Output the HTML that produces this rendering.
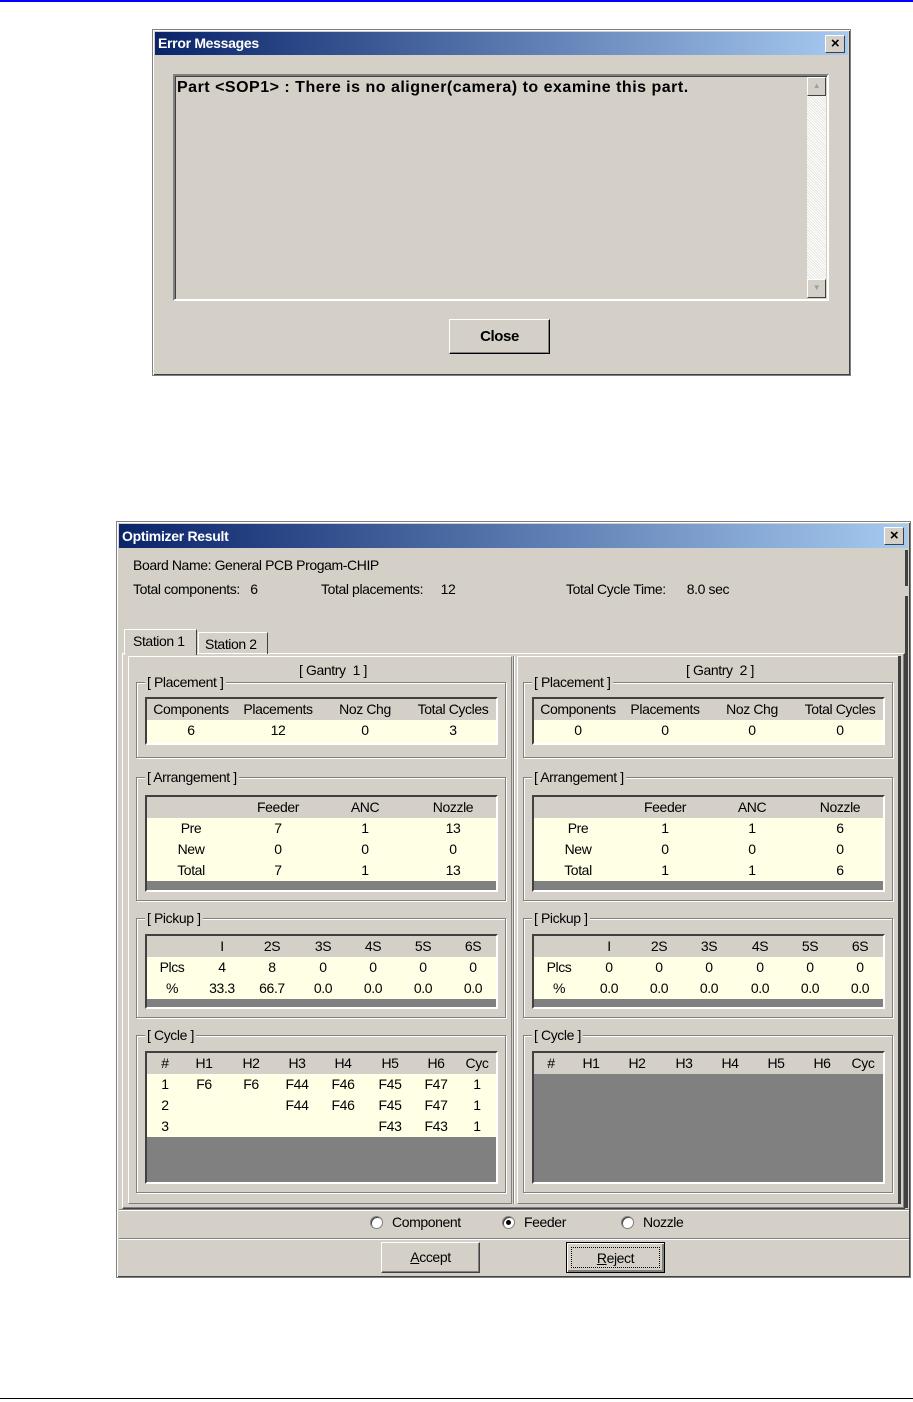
<!DOCTYPE html>
<html><head><meta charset="utf-8"><style>
*{margin:0;padding:0;box-sizing:border-box}
body{width:913px;height:1402px;position:relative;background:#fff;font-family:"Liberation Sans",sans-serif;font-size:14px;color:#000;overflow:hidden;letter-spacing:-0.4px}
div,span{position:absolute}
.win{background:#d4d0c8;border:1px solid #808080;box-shadow:inset 1px 1px #fff,inset -1px -1px #404040}
.title{background:linear-gradient(90deg,#0a246a,#a6caf0);color:#fff;font-weight:bold;font-size:14px;line-height:22px;padding-left:3px;letter-spacing:-0.3px}
.xb{width:20px;height:18px;background:#d4d0c8;border:1px solid;border-color:#fff #404040 #404040 #fff;font-weight:bold;font-size:15px;line-height:15px;text-align:center;color:#000}
.sunk{border:2px solid;border-color:#808080 #fff #fff #808080;box-shadow:inset 1px 1px #404040}
.grp{border:1px solid #808080;box-shadow:1px 1px #fff,inset 1px 1px #fff}
.lg{background:#d4d0c8;padding:0 2px;line-height:16px}
.tb{background:#808080;border:2px solid;border-color:#404040 #fff #fff #404040;overflow:hidden}
.hd{left:0;right:0;background:#d4d0c8;height:21px}
.yl{left:0;right:0;background:#ffffe6}
.c{width:80px;margin-left:-40px;text-align:center;line-height:21px}
.btn{background:#d4d0c8;border:1px solid;border-color:#fff #404040 #404040 #fff;box-shadow:inset -1px -1px #808080;text-align:center;line-height:28px}
.rd{width:13px;height:13px;border-radius:50%;background:#fff;border:1px solid #808080;box-shadow:inset 1px 1px #404040}
</style></head><body>
<div style="left:0;top:0;width:913px;height:2px;background:#0000ff"></div>
<div style="left:0;top:1398px;width:913px;height:1px;background:#000"></div>

<!-- Error Messages -->
<div class="win" style="left:152px;top:29px;width:699px;height:347px"></div>
<div class="title" style="left:155px;top:32px;width:693px;height:23px">Error Messages</div>
<div class="xb" style="left:825px;top:35px">×</div>
<div class="sunk" style="left:173px;top:74px;width:656px;height:227px;background:#d4d0c8"></div>
<div style="left:177px;top:79px;font-weight:bold;font-size:16px;letter-spacing:0.5px">Part &lt;SOP1&gt; : There is no aligner(camera) to examine this part.</div>
<div style="left:807px;top:77px;width:19px;height:221px;background:repeating-linear-gradient(45deg,#e8e6e0 0 1px,#fff 1px 2px)"></div>
<div class="xb" style="left:807px;top:77px;width:19px;height:19px;font-size:8px;color:#a0a0a0;line-height:16px">▲</div>
<div class="xb" style="left:807px;top:279px;width:19px;height:19px;font-size:8px;color:#a0a0a0;line-height:16px">▼</div>
<div class="btn" style="left:449px;top:319px;width:101px;height:35px;font-weight:bold;line-height:33px;font-size:15px;border-color:#fff #000 #000 #fff">Close</div>

<!-- Optimizer Result -->
<div class="win" style="left:116px;top:521px;width:795px;height:757px"></div>
<div class="title" style="left:119px;top:524px;width:789px;height:24px;line-height:24px">Optimizer Result</div>
<div class="xb" style="left:884px;top:527px">×</div>
<div style="left:133px;top:557px">Board Name: General PCB Progam-CHIP</div>
<div style="left:133px;top:581px">Total components:&nbsp;&nbsp;&nbsp;6</div>
<div style="left:321px;top:581px">Total placements:&nbsp;&nbsp;&nbsp;&nbsp;&nbsp;12</div>
<div style="left:566px;top:581px">Total Cycle Time:&nbsp;&nbsp;&nbsp;&nbsp;&nbsp;&nbsp;8.0 sec</div>
<div style="left:905px;top:550px;width:3px;height:36px;background:#404040"></div>
<div style="left:905px;top:596px;width:3px;height:612px;background:#404040"></div>
<!-- tabs -->
<div style="left:122px;top:653px;width:783px;height:556px;border:1px solid;border-color:#fff #404040 #404040 #fff;box-shadow:inset -1px -1px #808080"></div>
<div style="left:124px;top:629px;width:73px;height:26px;background:#d4d0c8;border:1px solid;border-bottom:none;border-color:#fff #404040 #fff #fff;line-height:22px;padding-left:8px">Station 1</div>
<div style="left:198px;top:632px;width:70px;height:22px;border:1px solid;border-bottom:none;border-color:#fff #404040 #fff #fff;line-height:22px;padding-left:6px">Station 2</div>
<div style="left:128px;top:656px;width:384px;height:548px;border:1px solid;border-color:#fff #808080 #808080 #fff"></div>
<div style="left:513px;top:656px;width:2px;height:548px;background:#808080;border-right:1px solid #fff"></div>
<div style="left:517px;top:656px;width:384px;height:548px;border:1px solid;border-color:#fff #808080 #808080 #fff"></div>
<div style="left:898px;top:656px;width:3px;height:548px;background:#404040"></div>

<div class="c" style="left:333px;top:660px;width:120px;margin-left:-60px">[ Gantry&nbsp; 1 ]</div>
<div class="c" style="left:720px;top:660px;width:120px;margin-left:-60px">[ Gantry&nbsp; 2 ]</div>

<!-- LEFT groups -->
<div class="grp" style="left:136px;top:682px;width:370px;height:76px"></div>
<div class="lg" style="left:145px;top:674px">[ Placement ]</div>
<div class="tb" style="left:145px;top:697px;width:353px;height:48px"><div class="hd" style="top:0"></div><div class="yl" style="top:21px;height:23px"></div></div>
<span class="c" style="left:191px;top:699px">Components</span><span class="c" style="left:278px;top:699px">Placements</span><span class="c" style="left:365px;top:699px">Noz Chg</span><span class="c" style="left:453px;top:699px">Total Cycles</span>
<span class="c" style="left:191px;top:720px">6</span><span class="c" style="left:278px;top:720px">12</span><span class="c" style="left:365px;top:720px">0</span><span class="c" style="left:453px;top:720px">3</span>

<div class="grp" style="left:136px;top:777px;width:370px;height:124px"></div>
<div class="lg" style="left:145px;top:769px">[ Arrangement ]</div>
<div class="tb" style="left:145px;top:795px;width:353px;height:97px"><div class="hd" style="top:0"></div><div class="yl" style="top:21px;height:63px"></div></div>
<span class="c" style="left:278px;top:797px">Feeder</span><span class="c" style="left:365px;top:797px">ANC</span><span class="c" style="left:453px;top:797px">Nozzle</span>
<span class="c" style="left:191px;top:818px">Pre</span><span class="c" style="left:278px;top:818px">7</span><span class="c" style="left:365px;top:818px">1</span><span class="c" style="left:453px;top:818px">13</span>
<span class="c" style="left:191px;top:839px">New</span><span class="c" style="left:278px;top:839px">0</span><span class="c" style="left:365px;top:839px">0</span><span class="c" style="left:453px;top:839px">0</span>
<span class="c" style="left:191px;top:860px">Total</span><span class="c" style="left:278px;top:860px">7</span><span class="c" style="left:365px;top:860px">1</span><span class="c" style="left:453px;top:860px">13</span>

<div class="grp" style="left:136px;top:918px;width:370px;height:100px"></div>
<div class="lg" style="left:145px;top:910px">[ Pickup ]</div>
<div class="tb" style="left:145px;top:934px;width:353px;height:75px"><div class="hd" style="top:0"></div><div class="yl" style="top:21px;height:42px"></div></div>
<span class="c" style="left:222px;top:936px">I</span><span class="c" style="left:272px;top:936px">2S</span><span class="c" style="left:323px;top:936px">3S</span><span class="c" style="left:373px;top:936px">4S</span><span class="c" style="left:423px;top:936px">5S</span><span class="c" style="left:473px;top:936px">6S</span>
<span class="c" style="left:172px;top:957px">Plcs</span><span class="c" style="left:222px;top:957px">4</span><span class="c" style="left:272px;top:957px">8</span><span class="c" style="left:323px;top:957px">0</span><span class="c" style="left:373px;top:957px">0</span><span class="c" style="left:423px;top:957px">0</span><span class="c" style="left:473px;top:957px">0</span>
<span class="c" style="left:172px;top:978px">%</span><span class="c" style="left:222px;top:978px">33.3</span><span class="c" style="left:272px;top:978px">66.7</span><span class="c" style="left:323px;top:978px">0.0</span><span class="c" style="left:373px;top:978px">0.0</span><span class="c" style="left:423px;top:978px">0.0</span><span class="c" style="left:473px;top:978px">0.0</span>

<div class="grp" style="left:136px;top:1035px;width:370px;height:158px"></div>
<div class="lg" style="left:145px;top:1027px">[ Cycle ]</div>
<div class="tb" style="left:145px;top:1051px;width:353px;height:133px"><div class="hd" style="top:0"></div><div class="yl" style="top:21px;height:63px"></div></div>
<span class="c" style="left:165px;top:1053px">#</span><span class="c" style="left:204px;top:1053px">H1</span><span class="c" style="left:251px;top:1053px">H2</span><span class="c" style="left:297px;top:1053px">H3</span><span class="c" style="left:343px;top:1053px">H4</span><span class="c" style="left:390px;top:1053px">H5</span><span class="c" style="left:436px;top:1053px">H6</span><span class="c" style="left:477px;top:1053px">Cyc</span>
<span class="c" style="left:165px;top:1074px">1</span><span class="c" style="left:204px;top:1074px">F6</span><span class="c" style="left:251px;top:1074px">F6</span><span class="c" style="left:297px;top:1074px">F44</span><span class="c" style="left:343px;top:1074px">F46</span><span class="c" style="left:390px;top:1074px">F45</span><span class="c" style="left:436px;top:1074px">F47</span><span class="c" style="left:477px;top:1074px">1</span>
<span class="c" style="left:165px;top:1095px">2</span><span class="c" style="left:297px;top:1095px">F44</span><span class="c" style="left:343px;top:1095px">F46</span><span class="c" style="left:390px;top:1095px">F45</span><span class="c" style="left:436px;top:1095px">F47</span><span class="c" style="left:477px;top:1095px">1</span>
<span class="c" style="left:165px;top:1116px">3</span><span class="c" style="left:390px;top:1116px">F43</span><span class="c" style="left:436px;top:1116px">F43</span><span class="c" style="left:477px;top:1116px">1</span>

<!-- RIGHT groups -->
<div class="grp" style="left:523px;top:682px;width:370px;height:76px"></div>
<div class="lg" style="left:532px;top:674px">[ Placement ]</div>
<div class="tb" style="left:532px;top:697px;width:353px;height:48px"><div class="hd" style="top:0"></div><div class="yl" style="top:21px;height:23px"></div></div>
<span class="c" style="left:578px;top:699px">Components</span><span class="c" style="left:665px;top:699px">Placements</span><span class="c" style="left:752px;top:699px">Noz Chg</span><span class="c" style="left:840px;top:699px">Total Cycles</span>
<span class="c" style="left:578px;top:720px">0</span><span class="c" style="left:665px;top:720px">0</span><span class="c" style="left:752px;top:720px">0</span><span class="c" style="left:840px;top:720px">0</span>

<div class="grp" style="left:523px;top:777px;width:370px;height:124px"></div>
<div class="lg" style="left:532px;top:769px">[ Arrangement ]</div>
<div class="tb" style="left:532px;top:795px;width:353px;height:97px"><div class="hd" style="top:0"></div><div class="yl" style="top:21px;height:63px"></div></div>
<span class="c" style="left:665px;top:797px">Feeder</span><span class="c" style="left:752px;top:797px">ANC</span><span class="c" style="left:840px;top:797px">Nozzle</span>
<span class="c" style="left:578px;top:818px">Pre</span><span class="c" style="left:665px;top:818px">1</span><span class="c" style="left:752px;top:818px">1</span><span class="c" style="left:840px;top:818px">6</span>
<span class="c" style="left:578px;top:839px">New</span><span class="c" style="left:665px;top:839px">0</span><span class="c" style="left:752px;top:839px">0</span><span class="c" style="left:840px;top:839px">0</span>
<span class="c" style="left:578px;top:860px">Total</span><span class="c" style="left:665px;top:860px">1</span><span class="c" style="left:752px;top:860px">1</span><span class="c" style="left:840px;top:860px">6</span>

<div class="grp" style="left:523px;top:918px;width:370px;height:100px"></div>
<div class="lg" style="left:532px;top:910px">[ Pickup ]</div>
<div class="tb" style="left:532px;top:934px;width:353px;height:75px"><div class="hd" style="top:0"></div><div class="yl" style="top:21px;height:42px"></div></div>
<span class="c" style="left:609px;top:936px">I</span><span class="c" style="left:659px;top:936px">2S</span><span class="c" style="left:709px;top:936px">3S</span><span class="c" style="left:760px;top:936px">4S</span><span class="c" style="left:810px;top:936px">5S</span><span class="c" style="left:860px;top:936px">6S</span>
<span class="c" style="left:559px;top:957px">Plcs</span><span class="c" style="left:609px;top:957px">0</span><span class="c" style="left:659px;top:957px">0</span><span class="c" style="left:709px;top:957px">0</span><span class="c" style="left:760px;top:957px">0</span><span class="c" style="left:810px;top:957px">0</span><span class="c" style="left:860px;top:957px">0</span>
<span class="c" style="left:559px;top:978px">%</span><span class="c" style="left:609px;top:978px">0.0</span><span class="c" style="left:659px;top:978px">0.0</span><span class="c" style="left:709px;top:978px">0.0</span><span class="c" style="left:760px;top:978px">0.0</span><span class="c" style="left:810px;top:978px">0.0</span><span class="c" style="left:860px;top:978px">0.0</span>

<div class="grp" style="left:523px;top:1035px;width:370px;height:158px"></div>
<div class="lg" style="left:532px;top:1027px">[ Cycle ]</div>
<div class="tb" style="left:532px;top:1051px;width:353px;height:133px"><div class="hd" style="top:0"></div></div>
<span class="c" style="left:551px;top:1053px">#</span><span class="c" style="left:591px;top:1053px">H1</span><span class="c" style="left:637px;top:1053px">H2</span><span class="c" style="left:684px;top:1053px">H3</span><span class="c" style="left:730px;top:1053px">H4</span><span class="c" style="left:776px;top:1053px">H5</span><span class="c" style="left:822px;top:1053px">H6</span><span class="c" style="left:863px;top:1053px">Cyc</span>

<!-- bottom -->
<div style="left:119px;top:1209px;width:790px;height:2px;background:#808080;border-bottom:1px solid #fff"></div>
<div class="rd" style="left:370px;top:1216px"></div><div style="left:392px;top:1214px">Component</div>
<div class="rd" style="left:502px;top:1216px"></div><div style="left:506px;top:1220px;width:5px;height:5px;border-radius:50%;background:#000"></div><div style="left:524px;top:1214px">Feeder</div>
<div class="rd" style="left:621px;top:1216px"></div><div style="left:643px;top:1214px">Nozzle</div>
<div style="left:119px;top:1238px;width:790px;height:2px;background:#808080;border-bottom:1px solid #fff"></div>
<div class="btn" style="left:381px;top:1242px;width:99px;height:31px"><u>A</u>ccept</div>
<div class="btn" style="left:566px;top:1242px;width:99px;height:31px;border:1px solid #000;box-shadow:inset 1px 1px #fff,inset -2px -2px #808080"><span style="left:4px;top:4px;right:4px;bottom:4px;border:1px dotted #000;line-height:20px;text-align:center"><u>R</u>eject</span></div>
</body></html>
